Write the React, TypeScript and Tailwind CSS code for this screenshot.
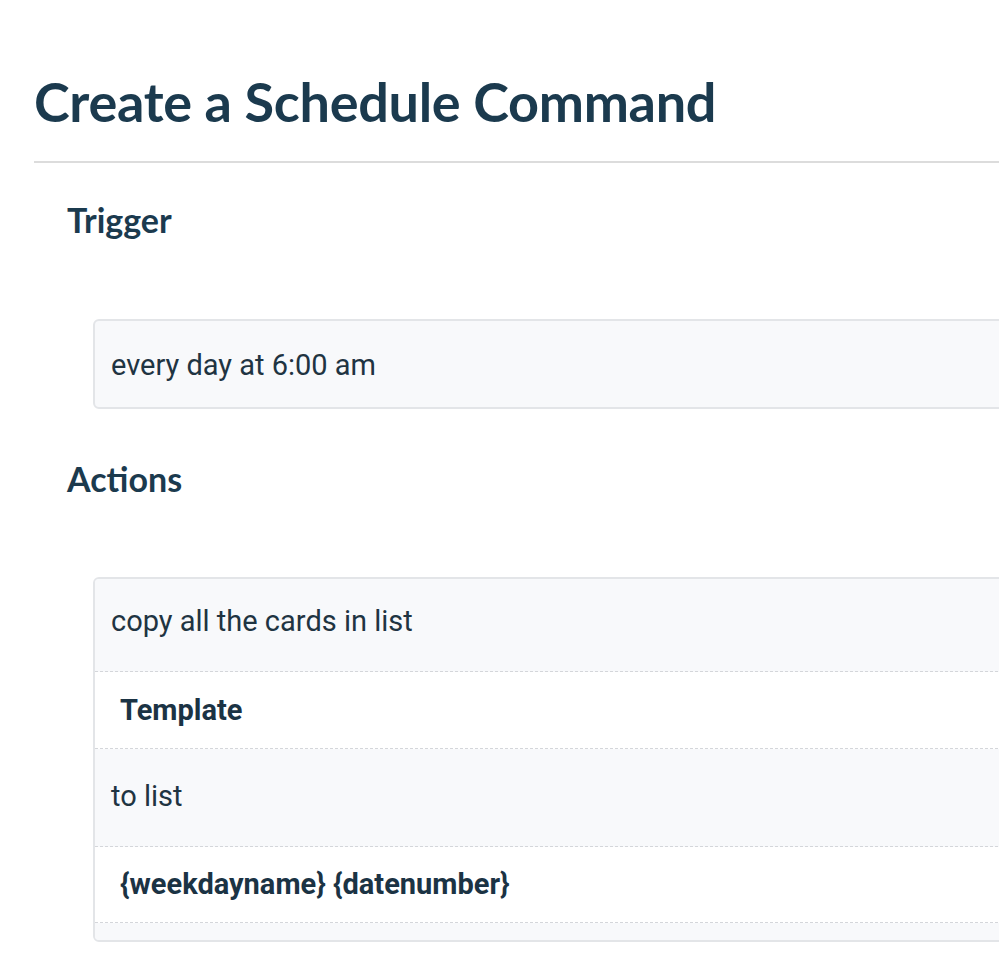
import React from "react";

export default function App() {
  return (
    <div className="w-[999px] min-h-[964px] overflow-hidden bg-white text-[#1c3a4d]">
      <div className="w-[1100px] pl-[34px] pt-[70px]">
        <h1 className="font-['Lato',sans-serif] font-bold text-[54px] leading-[64px] tracking-[-0.3px] text-[#1b3a4e]">
          Create a Schedule Command
        </h1>
        <div className="mt-[27px] h-[2px] bg-[#dcdcdc]" />
        <h2 className="mt-[37px] pl-[33px] font-['Lato',sans-serif] font-bold text-[34px] leading-[40px] text-[#1b3a4e]">
          Trigger
        </h2>
        <div className="mt-[79px] ml-[59px] h-[90px] flex items-center rounded-[6px] border-2 border-[#e3e5e8] bg-[#f8f9fb] pl-[16px] pt-[4px] font-['Roboto',sans-serif] text-[29px] text-[#1f3442]">
          every day at 6:00 am
        </div>
        <h2 className="mt-[50px] pl-[33px] font-['Lato',sans-serif] font-bold text-[34px] leading-[40px] text-[#1b3a4e]">
          Actions
        </h2>
        <div className="mt-[78px] ml-[59px] rounded-[6px] border-2 border-[#e3e5e8] bg-[#f8f9fb] font-['Roboto',sans-serif] text-[29px] text-[#1f3442] overflow-hidden">
          <div className="h-[93px] flex items-center pl-[16px] pb-[6px] bg-[#f8f9fb] border-b border-dashed border-[#d4d6da]">
            copy all the cards in list
          </div>
          <div className="h-[77px] flex items-center pl-[25px] pt-[2px] bg-white font-bold text-[#1b3344] border-b border-dashed border-[#d4d6da]">
            Template
          </div>
          <div className="h-[98px] flex items-center pl-[16px] pb-[1px] bg-[#f8f9fb] border-b border-dashed border-[#d4d6da]">
            to list
          </div>
          <div className="h-[76px] flex items-center pl-[25px] bg-white font-bold text-[#1b3344] border-b border-dashed border-[#d4d6da]">
            {"{weekdayname} {datenumber}"}
          </div>
          <div className="h-[17px] bg-[#f8f9fb]" />
        </div>
      </div>
    </div>
  );
}
